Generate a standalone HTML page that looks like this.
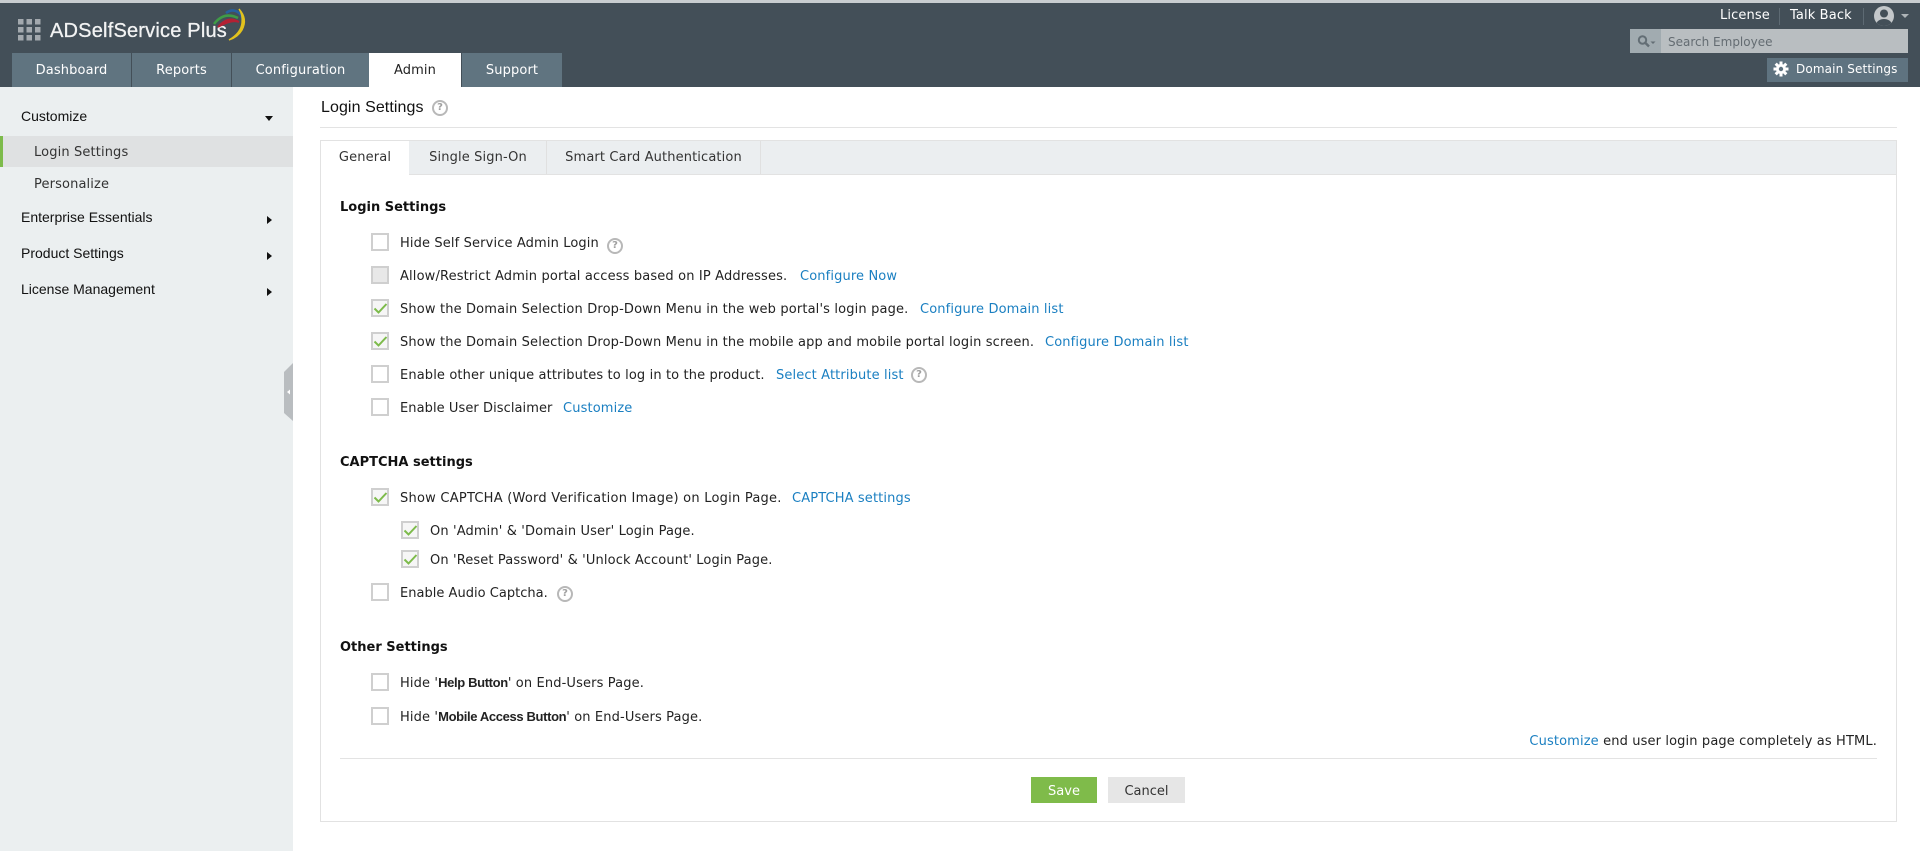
<!DOCTYPE html>
<html lang="en"><head><meta charset="utf-8"><title>ADSelfService Plus</title>
<style>
html,body{margin:0;padding:0;width:1920px;height:851px;overflow:hidden;background:#fff}
body{position:relative;font-family:"DejaVu Sans",sans-serif;font-size:13px;color:#222}
.a{position:absolute}
.t{position:absolute;white-space:nowrap;line-height:20px;height:20px;letter-spacing:.13px;margin-top:2px}
.s{font-family:"Liberation Sans",sans-serif;font-size:14px;color:#111;letter-spacing:0;margin-top:0}
.m{color:#333}
.h{font-weight:bold;color:#111;font-size:13px;letter-spacing:0}
.l{color:#1a7fc1}
.nav{position:absolute;top:53px;height:34px;line-height:35px;text-align:center;background:#607480;color:#fff;letter-spacing:.13px}
.tab{position:absolute;top:141px;height:33px;line-height:34px;text-align:center;color:#333;letter-spacing:.13px}
.c{position:absolute;width:14px;height:14px;border:2px solid #cfcfcf;background:#fff}
.c svg{position:absolute;left:0;top:0;overflow:visible}
.q{position:absolute;width:12px;height:12px;border:2px solid #b8b8b8;border-radius:50%;color:#a0a0a0;font-size:10px;line-height:12px;text-align:center;font-weight:bold}
b.n{font-family:"Liberation Sans",sans-serif;font-weight:bold;font-size:13px;letter-spacing:-.36px}
.tri{position:absolute;width:0;height:0}
</style></head><body>
<div class="a" style="left:0;top:0;width:1920px;height:87px;background:#434f58"></div>
<div class="a" style="left:0;top:0;width:1920px;height:3px;background:#c9cdd0"></div>

<svg class="a" style="left:16px;top:17px" width="26" height="26">
<g fill="#a3a9ae"><rect x="2" y="2" width="5.5" height="5.5"/><rect x="10.5" y="2" width="5.5" height="5.5"/><rect x="19" y="2" width="5.5" height="5.5"/><rect x="2" y="10" width="5.5" height="5.5"/><rect x="10.5" y="10" width="5.5" height="5.5"/><rect x="19" y="10" width="5.5" height="5.5"/><rect x="2" y="18" width="5.5" height="5.5"/><rect x="10.5" y="18" width="5.5" height="5.5"/><rect x="19" y="18" width="5.5" height="5.5"/></g></svg>
<div class="t" style="left:50px;top:19px;font-family:'Liberation Sans',sans-serif;font-size:20px;color:#f2f3f3;letter-spacing:.2px;-webkit-text-stroke:.3px #f2f3f3">ADSelfService Plus</div>
<svg class="a" style="left:206px;top:0" width="50" height="45" fill="none">
<path d="M8 24Q18 11 32 18" stroke="#3f9b46" stroke-width="2.6"/>
<path d="M12 27Q22 15 33 22Q26 19 12 27Z" fill="#b32033" stroke="#b32033" stroke-width="1.8"/>
<path d="M20 13Q28 7 35 15Q37 19 37 24" stroke="#27609f" stroke-width="2.6"/>
<path d="M33 9Q42 19 36 30Q32 37 23 40Q35 33 36 23Q37 15 33 9Z" fill="#e2c21d" stroke="#e2c21d" stroke-width="1.4"/>
</svg>

<div class="nav" style="left:12px;width:119px">Dashboard</div>
<div class="nav" style="left:132px;width:99px">Reports</div>
<div class="nav" style="left:232px;width:137px">Configuration</div>
<div class="nav" style="left:369px;width:92px;background:#fff;color:#222">Admin</div>
<div class="nav" style="left:462px;width:100px">Support</div>

<div class="t" style="left:1720px;top:4px;color:#fff">License</div>
<div class="a" style="left:1779px;top:8px;width:1px;height:17px;background:#5d6a73"></div>
<div class="t" style="left:1790px;top:4px;color:#fff">Talk Back</div>
<div class="a" style="left:1863px;top:8px;width:1px;height:17px;background:#5d6a73"></div>
<svg class="a" style="left:1873px;top:5px" width="24" height="24"><defs><clipPath id="u"><circle cx="11" cy="11" r="10"/></clipPath></defs><circle cx="11" cy="11" r="10" fill="#c4c8cb"/><g clip-path="url(#u)" fill="#434f58"><circle cx="11" cy="8.5" r="4"/><ellipse cx="11" cy="19" rx="7.5" ry="5"/></g></svg>
<div class="tri" style="left:1901px;top:14px;border-left:4px solid transparent;border-right:4px solid transparent;border-top:4px solid #aeb4b8"></div>

<div class="a" style="left:1630px;top:29px;width:278px;height:24px;background:#b9bec1"></div>
<div class="a" style="left:1630px;top:29px;width:31px;height:24px;background:#a1abb0"></div>
<svg class="a" style="left:1636px;top:33px" width="24" height="16" fill="none"><circle cx="6.5" cy="7" r="3.7" stroke="#636e75" stroke-width="2"/><path d="M9.5 10l3.5 3.5" stroke="#636e75" stroke-width="2.4"/><path d="M14.500 8.500h5l-2.500 2.500z" fill="#636e75"/></svg>
<div class="t" style="left:1668px;top:30px;color:#646c72;font-size:12px;letter-spacing:0">Search Employee</div>

<div class="a" style="left:1767px;top:58px;width:141px;height:24px;background:#5f7380"></div>
<svg class="a" style="left:1773px;top:61px" width="16" height="16" viewBox="0 0 16 16"><g fill="#fff"><circle cx="8" cy="8" r="5"/><rect x="6.500" y="0.500" width="3" height="15"/><rect x="6.500" y="0.500" width="3" height="15" transform="rotate(45 8 8)"/><rect x="6.500" y="0.500" width="3" height="15" transform="rotate(90 8 8)"/><rect x="6.500" y="0.500" width="3" height="15" transform="rotate(135 8 8)"/></g><circle cx="8" cy="8" r="2.200" fill="#5f7380"/></svg>
<div class="t" style="left:1796px;top:57px;color:#fff;font-size:12px">Domain Settings</div>

<div class="a" style="left:0;top:87px;width:293px;height:764px;background:#ebeff0"></div>
<div class="t s" style="left:21px;top:106px">Customize</div>
<div class="tri" style="left:265px;top:116px;border-left:4.500px solid transparent;border-right:4.500px solid transparent;border-top:5px solid #111"></div>
<div class="a" style="left:0;top:136px;width:293px;height:31px;background:#dfe1e2"></div>
<div class="a" style="left:0;top:136px;width:3px;height:31px;background:#7dbb4b"></div>
<div class="t m" style="left:34px;top:141px">Login Settings</div>
<div class="t m" style="left:34px;top:173px">Personalize</div>
<div class="t s" style="left:21px;top:207px">Enterprise Essentials</div>
<div class="t s" style="left:21px;top:243px">Product Settings</div>
<div class="t s" style="left:21px;top:279px">License Management</div>
<div class="tri" style="left:267px;top:216px;border-top:4.500px solid transparent;border-bottom:4.500px solid transparent;border-left:5px solid #111"></div>
<div class="tri" style="left:267px;top:252px;border-top:4.500px solid transparent;border-bottom:4.500px solid transparent;border-left:5px solid #111"></div>
<div class="tri" style="left:267px;top:288px;border-top:4.500px solid transparent;border-bottom:4.500px solid transparent;border-left:5px solid #111"></div>
<svg class="a" style="left:284px;top:363px" width="9" height="59"><path d="M9 0V58L0 50V9Z" fill="#b9bdc0"/><path d="M3 29l3-2.500v5z" fill="#fff"/></svg>

<div class="t" style="left:321px;top:96px;font-family:'Liberation Sans',sans-serif;font-size:16px;color:#111;letter-spacing:.08px">Login Settings</div>
<div class="q" style="left:432px;top:100px">?</div>
<div class="a" style="left:320px;top:127px;width:1577px;height:1px;background:#e3e3e3"></div>

<div class="a" style="left:320px;top:140px;width:1575px;height:680px;border:1px solid #e2e2e2;background:#fff"></div>
<div class="a" style="left:321px;top:141px;width:1575px;height:33px;background:#ebeef0;border-bottom:1px solid #e2e2e2"></div>
<div class="tab" style="left:321px;width:88px;height:34px;background:#fff">General</div>
<div class="tab" style="left:410px;width:136px">Single Sign-On</div>
<div class="a" style="left:546px;top:141px;width:1px;height:33px;background:#e0e0e0"></div>
<div class="tab" style="left:547px;width:213px">Smart Card Authentication</div>
<div class="a" style="left:760px;top:141px;width:1px;height:33px;background:#e0e0e0"></div>

<div class="t h" style="left:340px;top:196px">Login Settings</div>

<div class="c" style="left:371px;top:233px"></div>
<div class="t" style="left:400px;top:232px">Hide Self Service Admin Login</div>
<div class="q" style="left:607px;top:238px">?</div>

<div class="c" style="left:371px;top:266px;background:#e8e8e8"></div>
<div class="t" style="left:400px;top:265px;letter-spacing:.15px">Allow/Restrict Admin portal access based on IP Addresses.</div>
<div class="t l" style="left:800px;top:265px">Configure Now</div>

<div class="c" style="left:371px;top:299px;background:#f6f6f6"><svg width="14" height="14" fill="none"><path d="M1.500 7.500L5.500 11.500L13.500 3" stroke="#7dbb4b" stroke-width="2"/></svg></div>
<div class="t" style="left:400px;top:298px;letter-spacing:.15px">Show the Domain Selection Drop-Down Menu in the web portal's login page.</div>
<div class="t l" style="left:920px;top:298px">Configure Domain list</div>

<div class="c" style="left:371px;top:332px;background:#f6f6f6"><svg width="14" height="14" fill="none"><path d="M1.500 7.500L5.500 11.500L13.500 3" stroke="#7dbb4b" stroke-width="2"/></svg></div>
<div class="t" style="left:400px;top:331px;letter-spacing:.15px">Show the Domain Selection Drop-Down Menu in the mobile app and mobile portal login screen.</div>
<div class="t l" style="left:1045px;top:331px">Configure Domain list</div>

<div class="c" style="left:371px;top:365px"></div>
<div class="t" style="left:400px;top:364px">Enable other unique attributes to log in to the product.</div>
<div class="t l" style="left:776px;top:364px">Select Attribute list</div>
<div class="q" style="left:911px;top:367px">?</div>

<div class="c" style="left:371px;top:398px"></div>
<div class="t" style="left:400px;top:397px;letter-spacing:.07px">Enable User Disclaimer</div>
<div class="t l" style="left:563px;top:397px">Customize</div>

<div class="t h" style="left:340px;top:451px">CAPTCHA settings</div>

<div class="c" style="left:371px;top:488px;background:#f6f6f6"><svg width="14" height="14" fill="none"><path d="M1.500 7.500L5.500 11.500L13.500 3" stroke="#7dbb4b" stroke-width="2"/></svg></div>
<div class="t" style="left:400px;top:487px;letter-spacing:.24px">Show CAPTCHA (Word Verification Image) on Login Page.</div>
<div class="t l" style="left:792px;top:487px">CAPTCHA settings</div>

<div class="c" style="left:401px;top:521px;background:#f6f6f6"><svg width="14" height="14" fill="none"><path d="M1.500 7.500L5.500 11.500L13.500 3" stroke="#7dbb4b" stroke-width="2"/></svg></div>
<div class="t" style="left:430px;top:520px">On 'Admin' &amp; 'Domain User' Login Page.</div>

<div class="c" style="left:401px;top:550px;background:#f6f6f6"><svg width="14" height="14" fill="none"><path d="M1.500 7.500L5.500 11.500L13.500 3" stroke="#7dbb4b" stroke-width="2"/></svg></div>
<div class="t" style="left:430px;top:549px">On 'Reset Password' &amp; 'Unlock Account' Login Page.</div>

<div class="c" style="left:371px;top:583px"></div>
<div class="t" style="left:400px;top:582px;letter-spacing:.02px">Enable Audio Captcha.</div>
<div class="q" style="left:557px;top:586px">?</div>

<div class="t h" style="left:340px;top:636px">Other Settings</div>

<div class="c" style="left:371px;top:673px"></div>
<div class="t" style="left:400px;top:671px">Hide '<b class="n">Help Button</b>' on End-Users Page.</div>
<div class="c" style="left:371px;top:707px"></div>
<div class="t" style="left:400px;top:705px">Hide '<b class="n">Mobile Access Button</b>' on End-Users Page.</div>

<div class="t" style="right:43px;top:730px"><span class="l">Customize</span> end user login page completely as HTML.</div>
<div class="a" style="left:340px;top:758px;width:1537px;height:1px;background:#e3e3e3"></div>
<div class="a" style="left:1031px;top:777px;width:66px;height:26px;line-height:29px;text-align:center;background:#7fbb4a;color:#fff">Save</div>
<div class="a" style="left:1108px;top:777px;width:77px;height:26px;line-height:29px;text-align:center;background:#e6e6e6;color:#333">Cancel</div>
</body></html>
